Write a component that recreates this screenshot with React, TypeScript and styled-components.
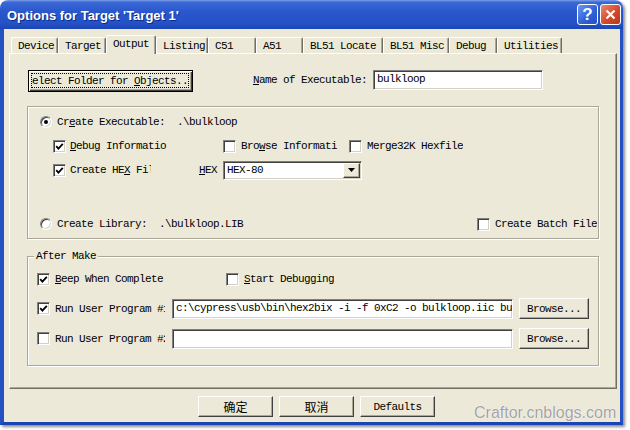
import React from "react";
import styled, { createGlobalStyle } from "styled-components";

const FACE = "#ECE9D8";
const FRAME = "#2351c2";
const MONO = `"Liberation Mono", "Noto Sans CJK SC", monospace`;

const GlobalStyle = createGlobalStyle`
  html, body {
    margin: 0;
    padding: 0;
    background: #fff;
  }
  body {
    width: 630px;
    height: 430px;
    overflow: hidden;
  }
`;

const Screen = styled.div`
  position: relative;
  width: 630px;
  height: 430px;
`;

const Window = styled.div`
  width: 623px;
  height: 425px;
  display: flex;
  flex-direction: column;
  border-radius: 8px 8px 0 0;
  box-shadow: 2px 2px 3px rgba(0, 0, 0, 0.45);
  font-family: ${MONO};
  font-size: 11px;
  letter-spacing: -0.6px;
  color: #000;
`;

/* ---------- caption ---------- */

const TitleBar = styled.div`
  height: 29px;
  flex: none;
  display: flex;
  align-items: center;
  padding: 0 2px 0 7px;
  border-radius: 8px 8px 0 0;
  background: linear-gradient(
    to bottom,
    #7d9fe6 0%,
    #3a68d6 8%,
    #2a58cc 40%,
    #2452c6 80%,
    #1c45b4 100%
  );
`;

const Title = styled.div`
  flex: 1;
  font-family: "Liberation Sans", Arial, sans-serif;
  font-weight: bold;
  font-size: 13px;
  letter-spacing: 0;
  color: #fff;
  text-shadow: 1px 1px 0 #0c2a86;
  padding-top: 1px;
`;

const CaptionButton = styled.div<{ $kind: "help" | "close" }>`
  width: 21px;
  height: 21px;
  box-sizing: border-box;
  margin-left: 2px;
  border: 1px solid #fff;
  border-radius: 3px;
  display: flex;
  align-items: center;
  justify-content: center;
  background: ${(p) =>
    p.$kind === "help"
      ? "linear-gradient(135deg, #6f97ef 0%, #2f63d8 55%, #2050c4 100%)"
      : "linear-gradient(135deg, #e98a72 0%, #d2492c 55%, #b8371c 100%)"};
  color: #fff;
  font-family: "Liberation Sans", Arial, sans-serif;
  font-weight: bold;
  font-size: 17px;
  letter-spacing: 0;
`;

/* ---------- client area ---------- */

const Client = styled.div`
  flex: 1;
  display: flex;
  flex-direction: column;
  background: ${FACE};
  border-left: 4px solid ${FRAME};
  border-right: 3px solid ${FRAME};
  border-bottom: 3px solid #1b44b3;
  padding: 6px 0 0 5px;
`;

const TabRow = styled.div`
  display: flex;
  align-items: flex-end;
  height: 18px;
  padding-left: 2px;
  position: relative;
  z-index: 1;
`;

const Tab = styled.div<{ $w: number; $active?: boolean }>`
  box-sizing: border-box;
  width: ${(p) => p.$w}px;
  height: ${(p) => (p.$active ? 19 : 16)}px;
  margin-bottom: ${(p) => (p.$active ? -1 : 0)}px;
  padding: 1px 0 0 6px;
  line-height: 14px;
  white-space: nowrap;
  background: ${FACE};
  border-top: 1px solid #fff;
  border-left: 1px solid #fff;
  border-right: 1px solid #716f64;
  border-radius: 2px 2px 0 0;
  box-shadow: inset -1px 0 0 #aca899;
`;

const Panel = styled.div`
  box-sizing: border-box;
  width: 608px;
  height: 336px;
  display: flex;
  flex-direction: column;
  padding: 16px 0 0 17px;
  border: 1px solid;
  border-color: #fff #716f64 #716f64 #fff;
  box-shadow: inset -1px -1px 0 #aca899;
`;

const TopRow = styled.div`
  display: flex;
  align-items: flex-start;
`;

const FieldLabel = styled.span<{ $w: number; $ml?: number }>`
  width: ${(p) => p.$w}px;
  margin-left: ${(p) => p.$ml ?? 0}px;
  line-height: 20px;
  white-space: nowrap;
  flex: none;
`;

const Clip = styled.span<{ $w: number }>`
  display: inline-block;
  width: ${(p) => p.$w}px;
  overflow: hidden;
  white-space: nowrap;
  flex: none;
`;

const U = styled.span`
  text-decoration: underline;
  text-underline-offset: 1px;
`;

const TextBox = styled.div<{ $w: number; $h?: number }>`
  box-sizing: border-box;
  width: ${(p) => p.$w}px;
  height: ${(p) => p.$h ?? 20}px;
  flex: none;
  background: #fff;
  border: 1px solid;
  border-color: #808080 #fff #fff #808080;
  box-shadow: inset 1px 1px 0 #404040, inset -1px -1px 0 #d4d0c8;
  padding: 0 0 0 3px;
  line-height: 17px;
  white-space: nowrap;
  overflow: hidden;
`;

const PushButton = styled.div<{ $w: number; $h?: number; $default?: boolean }>`
  box-sizing: border-box;
  width: ${(p) => p.$w}px;
  height: ${(p) => p.$h ?? 21}px;
  flex: none;
  display: flex;
  align-items: center;
  justify-content: center;
  overflow: hidden;
  white-space: nowrap;
  background: ${FACE};
  border: 1px solid;
  border-color: ${(p) =>
    p.$default ? "#000" : "#fff #404040 #404040 #fff"};
  box-shadow: ${(p) =>
    p.$default
      ? "inset 1px 1px 0 #fff, inset -1px -1px 0 #404040, inset -2px -2px 0 #aca899"
      : "inset -1px -1px 0 #aca899"};
  padding: ${(p) => (p.$default ? "2px 3px 3px 2px" : "0")};
`;

const CjkText = styled.span`
  font-family: "Noto Sans CJK SC", sans-serif;
  font-size: 12px;
  letter-spacing: 0;
`;

const FocusRing = styled.span`
  flex: 1;
  align-self: stretch;
  display: flex;
  align-items: center;
  justify-content: center;
  overflow: hidden;
  white-space: nowrap;
  border: 1px dotted #000;
`;

/* ---------- group boxes ---------- */

const GroupBox = styled.div<{ $h: number; $mt: number }>`
  position: relative;
  box-sizing: border-box;
  width: 572px;
  height: ${(p) => p.$h}px;
  margin-top: ${(p) => p.$mt}px;
  display: flex;
  flex-direction: column;
  border: 1px solid #aca899;
  box-shadow: 1px 1px 0 #fff, inset 1px 1px 0 #fff;
`;

const Legend = styled.span`
  position: absolute;
  top: -8px;
  left: 6px;
  padding: 0 2px;
  line-height: 14px;
  background: ${FACE};
`;

const Row = styled.div<{ $h: number; $mt?: number; $pl: number; $bottom?: boolean }>`
  display: flex;
  align-items: center;
  height: ${(p) => p.$h}px;
  margin-top: ${(p) => (p.$bottom ? "auto" : `${p.$mt ?? 0}px`)};
  margin-bottom: ${(p) => (p.$bottom ? 6 : 0)}px;
  padding-left: ${(p) => p.$pl}px;
  white-space: nowrap;
`;

const Cell = styled.div<{ $w?: number }>`
  display: flex;
  align-items: center;
  width: ${(p) => (p.$w ? `${p.$w}px` : "auto")};
  flex: none;
  white-space: nowrap;
  overflow: hidden;
`;

const Box = styled.span<{ $gap?: number }>`
  box-sizing: border-box;
  width: 13px;
  height: 13px;
  flex: none;
  margin-right: ${(p) => p.$gap ?? 4}px;
  background: #fff;
  border: 1px solid;
  border-color: #808080 #fff #fff #808080;
  box-shadow: inset 1px 1px 0 #404040, inset -1px -1px 0 #d4d0c8;
  display: flex;
  align-items: center;
  justify-content: center;
`;

const RadioDot = styled.span`
  box-sizing: border-box;
  width: 12px;
  height: 12px;
  flex: none;
  margin-right: 5px;
  border-radius: 50%;
  background: #fff;
  border: 1px solid;
  border-color: #808080 #fff #fff #808080;
  box-shadow: inset 1px 1px 0 #404040, inset -1px -1px 0 #d4d0c8;
  display: flex;
  align-items: center;
  justify-content: center;
`;

const Pip = styled.span`
  width: 4px;
  height: 4px;
  border-radius: 50%;
  background: #000;
`;

const Combo = styled(TextBox)`
  display: flex;
  align-items: center;
  padding: 0 1px 0 3px;
`;

const ComboText = styled.span`
  flex: 1;
`;

const ComboArrow = styled.span`
  box-sizing: border-box;
  width: 17px;
  height: 15px;
  display: flex;
  align-items: center;
  justify-content: center;
  background: ${FACE};
  border: 1px solid;
  border-color: #fff #404040 #404040 #fff;
  box-shadow: inset -1px -1px 0 #aca899;
`;

const Footer = styled.div`
  display: flex;
  gap: 6px;
  margin: 7px 0 0 189px;
`;

const Watermark = styled.div`
  position: absolute;
  left: 474px;
  top: 404px;
  font-family: "Liberation Sans", Arial, sans-serif;
  font-size: 16px;
  color: #a3a3a3;
  text-shadow: 0 0 1px #fff, 0 0 1px #fff;
  letter-spacing: 0;
`;

/* ---------- small widgets ---------- */

const Check = ({ on, gap }: { on?: boolean; gap?: number }) => (
  <Box $gap={gap}>
    {on && (
      <svg width="9" height="9" viewBox="0 0 9 9">
        <polyline
          points="1.2,4.2 3.4,6.6 7.8,1.8"
          fill="none"
          stroke="#000"
          strokeWidth="1.8"
        />
      </svg>
    )}
  </Box>
);

const Radio = ({ on }: { on?: boolean }) => (
  <RadioDot>{on && <Pip />}</RadioDot>
);

const tabs = [
  { label: "Device", w: 47 },
  { label: "Target", w: 48 },
  { label: "Output", w: 50, active: true },
  { label: "Listing", w: 52 },
  { label: "C51", w: 48 },
  { label: "A51", w: 47 },
  { label: "BL51 Locate", w: 80 },
  { label: "BL51 Misc", w: 66 },
  { label: "Debug", w: 48 },
  { label: "Utilities", w: 65 },
];

const App = () => (
  <Screen>
    <GlobalStyle />
    <Window>
      <TitleBar>
        <Title>Options for Target 'Target 1'</Title>
        <CaptionButton $kind="help">?</CaptionButton>
        <CaptionButton $kind="close">
          <svg width="11" height="11" viewBox="0 0 11 11">
            <path d="M1.5 1.5 L9.5 9.5 M9.5 1.5 L1.5 9.5" stroke="#fff" strokeWidth="2.2" />
          </svg>
        </CaptionButton>
      </TitleBar>

      <Client>
        <TabRow>
          {tabs.map((t) => (
            <Tab key={t.label} $w={t.w} $active={t.active}>
              {t.label}
            </Tab>
          ))}
        </TabRow>

        <Panel>
          <TopRow>
            <PushButton $w={165} $h={22} $default style={{ marginLeft: 1 }}>
              <FocusRing>
                <span>
                  Select Folder for <U>O</U>bjects...
                </span>
              </FocusRing>
            </PushButton>
            <FieldLabel $w={120} $ml={60}>
              <U>N</U>ame of Executable:
            </FieldLabel>
            <TextBox $w={170}>bulkloop</TextBox>
          </TopRow>

          <GroupBox $h={133} $mt={14}>
            <Row $h={16} $mt={7} $pl={12}>
              <Radio on />
              <Clip $w={120}>
                Cr<U>e</U>ate Executable:
              </Clip>
              .\bulkloop
            </Row>
            <Row $h={16} $mt={8} $pl={25}>
              <Cell $w={170}>
                <Check on />
                <span>
                  <U>D</U>ebug Informatio
                </span>
              </Cell>
              <Cell $w={126}>
                <Check gap={5} />
                <span>
                  Bro<U>w</U>se Informati
                </span>
              </Cell>
              <Cell>
                <Check gap={5} />
                Merge32K Hexfile
              </Cell>
            </Row>
            <Row $h={20} $mt={6} $pl={25}>
              <Cell $w={146}>
                <Check on />
                <Clip $w={81}>
                  Create HE<U>X</U> File
                </Clip>
              </Cell>
              <Cell $w={24}>
                <span>
                  <U>H</U>EX
                </span>
              </Cell>
              <Combo $w={139} $h={19}>
                <ComboText>HEX-80</ComboText>
                <ComboArrow>
                  <svg width="7" height="4" viewBox="0 0 7 4">
                    <path d="M0 0 H7 L3.5 4 Z" fill="#000" />
                  </svg>
                </ComboArrow>
              </Combo>
            </Row>
            <Row $h={16} $pl={12} $bottom>
              <Cell $w={437}>
                <Radio />
                <Clip $w={102}>Create Library:</Clip>
                .\bulkloop.LIB
              </Cell>
              <Cell>
                <Check gap={5} />
                Create Batch File
              </Cell>
            </Row>
          </GroupBox>

          <GroupBox $h={110} $mt={17}>
            <Legend>After Make</Legend>
            <Row $h={16} $mt={14} $pl={9}>
              <Cell $w={189}>
                <Check on gap={5} />
                <span>
                  <U>B</U>eep When Complete
                </span>
              </Cell>
              <Cell>
                <Check gap={5} />
                <span>
                  <U>S</U>tart Debugging
                </span>
              </Cell>
            </Row>
            <Row $h={21} $mt={11} $pl={9}>
              <Cell $w={135}>
                <Check on gap={5} />
                <Clip $w={110}>Run User Program #1</Clip>
              </Cell>
              <TextBox $w={341}>
                c:\cypress\usb\bin\hex2bix -i -f 0xC2 -o bulkloop.iic bu
              </TextBox>
              <PushButton $w={70} style={{ marginLeft: 6 }}>
                Browse...
              </PushButton>
            </Row>
            <Row $h={21} $mt={9} $pl={9}>
              <Cell $w={135}>
                <Check gap={5} />
                <Clip $w={110}>Run User Program #2</Clip>
              </Cell>
              <TextBox $w={341} />
              <PushButton $w={70} style={{ marginLeft: 6 }}>
                Browse...
              </PushButton>
            </Row>
          </GroupBox>
        </Panel>

        <Footer>
          <PushButton $w={75}>
            <CjkText>确定</CjkText>
          </PushButton>
          <PushButton $w={75}>
            <CjkText>取消</CjkText>
          </PushButton>
          <PushButton $w={75}>Defaults</PushButton>
        </Footer>
      </Client>
    </Window>
    <Watermark>Craftor.cnblogs.com</Watermark>
  </Screen>
);

export default App;
